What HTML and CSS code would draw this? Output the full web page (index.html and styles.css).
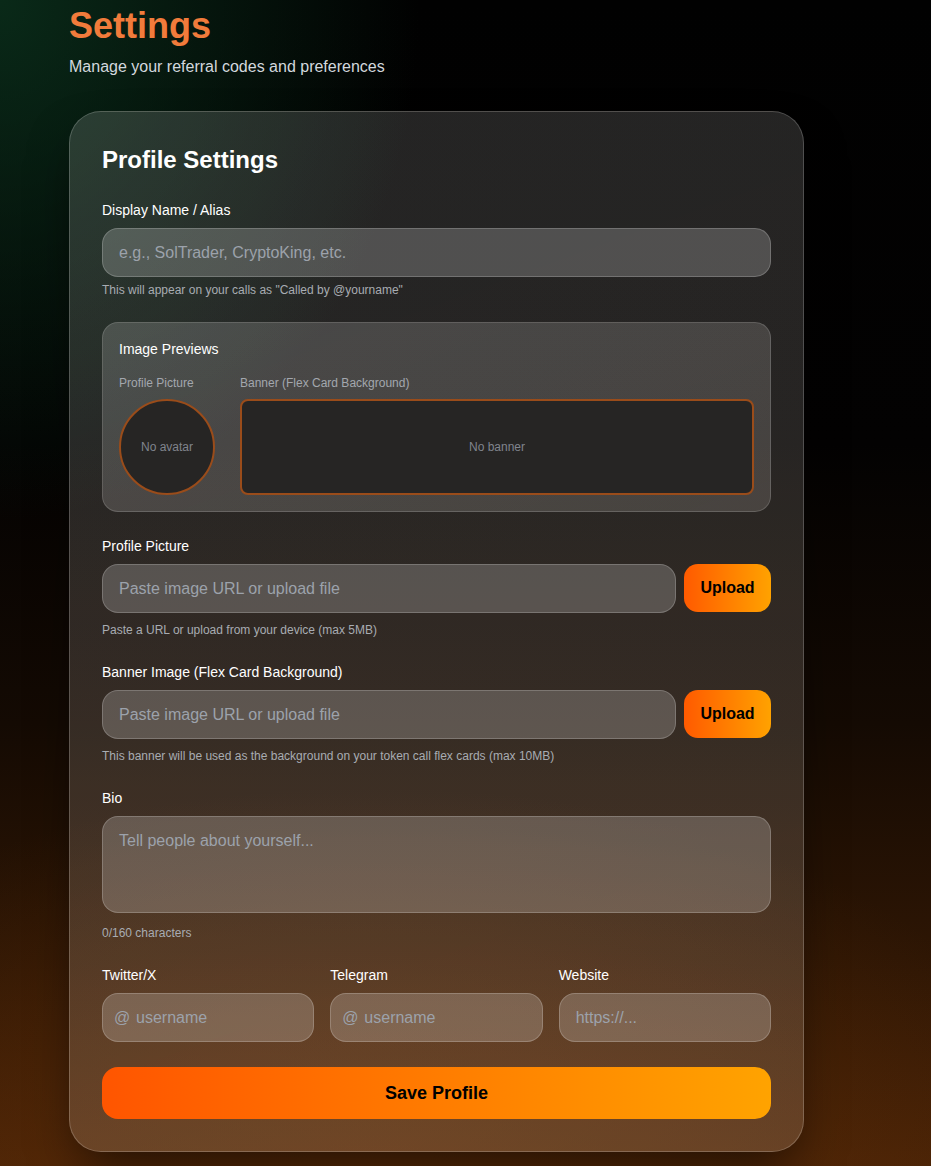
FILE: index.html
```html
<!DOCTYPE html>
<html lang="en">
<head>
<meta charset="utf-8">
<title>Settings</title>
<link rel="stylesheet" href="styles.css">
</head>
<body>
<main class="page">
  <header class="page-head">
    <h1 class="page-title">Settings</h1>
    <p class="page-sub">Manage your referral codes and preferences</p>
  </header>

  <section class="card">
    <h2 class="card-title">Profile Settings</h2>

    <div class="field">
      <label class="label">Display Name / Alias</label>
      <input class="input" type="text" placeholder="e.g., SolTrader, CryptoKing, etc.">
      <p class="hint">This will appear on your calls as "Called by @yourname"</p>
    </div>

    <div class="previews">
      <h3 class="previews-title">Image Previews</h3>
      <div class="previews-row">
        <div class="preview-col avatar-col">
          <span class="preview-label">Profile Picture</span>
          <div class="avatar">No avatar</div>
        </div>
        <div class="preview-col banner-col">
          <span class="preview-label">Banner (Flex Card Background)</span>
          <div class="banner">No banner</div>
        </div>
      </div>
    </div>

    <div class="field">
      <label class="label">Profile Picture</label>
      <div class="upload-row">
        <input class="input" type="text" placeholder="Paste image URL or upload file">
        <button class="btn-upload" type="button">Upload</button>
      </div>
      <p class="hint hint-upload">Paste a URL or upload from your device (max 5MB)</p>
    </div>

    <div class="field">
      <label class="label">Banner Image (Flex Card Background)</label>
      <div class="upload-row">
        <input class="input" type="text" placeholder="Paste image URL or upload file">
        <button class="btn-upload" type="button">Upload</button>
      </div>
      <p class="hint hint-upload">This banner will be used as the background on your token call flex cards (max 10MB)</p>
    </div>

    <div class="field">
      <label class="label">Bio</label>
      <textarea class="input textarea" rows="3" placeholder="Tell people about yourself..."></textarea>
      <p class="hint hint-count">0/160 characters</p>
    </div>

    <div class="socials">
      <div class="social">
        <label class="label">Twitter/X</label>
        <div class="prefixed">
          <span class="prefix">@</span>
          <input class="input input-prefixed" type="text" placeholder="username">
        </div>
      </div>
      <div class="social">
        <label class="label">Telegram</label>
        <div class="prefixed">
          <span class="prefix">@</span>
          <input class="input input-prefixed" type="text" placeholder="username">
        </div>
      </div>
      <div class="social">
        <label class="label">Website</label>
        <input class="input" type="text" placeholder="https://...">
      </div>
    </div>

    <button class="btn-save" type="button">Save Profile</button>
  </section>
</main>
</body>
</html>
```

FILE: styles.css
```css
* {
  box-sizing: border-box;
}

html, body {
  margin: 0;
  padding: 0;
}

body {
  min-height: 1166px;
  font-family: "Liberation Sans", Arial, sans-serif;
  color: #fff;
  background:
    radial-gradient(ellipse 420px 520px at 0% 0%, rgba(12, 55, 32, 0.75), rgba(12, 55, 32, 0) 100%),
    radial-gradient(ellipse 700px 380px at 40% 100%, rgba(100, 48, 8, 0.55), rgba(100, 48, 8, 0) 100%),
    linear-gradient(to bottom, #010101 0%, #030202 38%, #140a03 62%, #2e1604 82%, #4a2306 100%);
}

.page {
  padding: 6px 0 15px 69px;
}

.page-head {
  margin-bottom: 32px;
}

.page-title {
  margin: 0 0 9px;
  font-size: 36px;
  line-height: 40px;
  font-weight: 700;
  color: #f17b3b;
}

.page-sub {
  margin: 0;
  font-size: 16px;
  line-height: 24px;
  color: #d3d8de;
}

.card {
  width: 735px;
  padding: 32px;
  border: 1px solid rgba(255, 255, 255, 0.2);
  border-radius: 32px;
  background: linear-gradient(160deg, rgba(255, 255, 255, 0.14), rgba(255, 235, 215, 0.15));
  box-shadow: 0 25px 50px -12px rgba(0, 0, 0, 0.6);
  display: flex;
  flex-direction: column;
}

.card-title {
  margin: 0 0 24px;
  font-size: 24px;
  line-height: 32px;
  font-weight: 700;
}

.field {
  display: flex;
  flex-direction: column;
  margin-bottom: 24px;
}

.label {
  display: block;
  font-size: 14px;
  line-height: 20px;
  margin-bottom: 8px;
  color: #fff;
}

.input {
  width: 100%;
  height: 49px;
  padding: 0 16px;
  font-family: "Liberation Sans", Arial, sans-serif;
  font-size: 16px;
  color: #fff;
  background: rgba(255, 255, 255, 0.2);
  border: 1px solid rgba(255, 255, 255, 0.2);
  border-radius: 16px;
  outline: none;
}

.input::placeholder {
  color: #9ca2ab;
  opacity: 1;
}

.hint {
  margin: 5px 0 0;
  font-size: 12px;
  line-height: 16px;
  color: #a8acb2;
}

.hint-upload {
  margin-top: 9px;
}

.previews {
  padding: 16px;
  margin-bottom: 24px;
  border: 1px solid rgba(255, 255, 255, 0.15);
  border-radius: 16px;
  background: linear-gradient(160deg, rgba(255, 255, 255, 0.17), rgba(255, 245, 235, 0.14));
}

.previews-title {
  margin: 0 0 16px;
  font-size: 14px;
  line-height: 20px;
  font-weight: 400;
}

.previews-row {
  display: flex;
  gap: 25px;
}

.preview-col {
  display: flex;
  flex-direction: column;
  gap: 8px;
}

.avatar-col {
  width: 96px;
  flex: none;
}

.banner-col {
  flex: 1;
}

.preview-label {
  font-size: 12px;
  line-height: 16px;
  color: #a3a7ae;
  white-space: nowrap;
}

.avatar,
.banner {
  height: 96px;
  display: flex;
  align-items: center;
  justify-content: center;
  font-size: 12px;
  color: #80848d;
  background: #262524;
  border: 2px solid #9a4c1a;
}

.avatar {
  width: 96px;
  border-radius: 50%;
}

.banner {
  border-radius: 8px;
}

.upload-row {
  display: flex;
  align-items: flex-start;
  gap: 8px;
}

.upload-row .input {
  flex: 1;
}

.btn-upload {
  flex: none;
  width: 87px;
  height: 48px;
  border: none;
  border-radius: 14px;
  font-family: "Liberation Sans", Arial, sans-serif;
  font-size: 16px;
  font-weight: 700;
  color: #000;
  background: linear-gradient(90deg, #ff5a00, #ffa200);
}

.textarea {
  display: block;
  height: 97px;
  padding: 12px 16px;
  line-height: 24px;
  resize: none;
}

.hint-count {
  margin-top: 12px;
}

.socials {
  display: grid;
  grid-template-columns: repeat(3, 1fr);
  gap: 16px;
  margin-bottom: 25px;
}

.social {
  display: flex;
  flex-direction: column;
}

.prefixed {
  position: relative;
}

.prefix {
  position: absolute;
  left: 12px;
  top: 0;
  height: 49px;
  display: flex;
  align-items: center;
  font-size: 16px;
  color: #9ca2ab;
}

.input-prefixed {
  padding-left: 33px;
}

.btn-save {
  width: 100%;
  height: 52px;
  border: none;
  border-radius: 16px;
  font-family: "Liberation Sans", Arial, sans-serif;
  font-size: 18px;
  font-weight: 700;
  color: #000;
  background: linear-gradient(90deg, #ff5500, #ffa300);
}
```
